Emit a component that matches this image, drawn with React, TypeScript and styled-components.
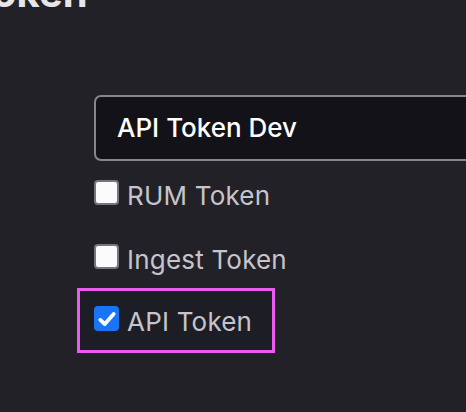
import React, { useState } from 'react';
import styled, { createGlobalStyle } from 'styled-components';

const GlobalStyle = createGlobalStyle`
    html, body {
        margin: 0;
        padding: 0;
        background: #222128;
        overflow: hidden;
    }
    body {
        font-family: Inter, 'Noto Sans', sans-serif;
    }
`;

const Page = styled.div`
    width: 466px;
    height: 412px;
    padding-left: 94px;
    box-sizing: border-box;
    overflow: hidden;
`;

// заголовок уходит за левый край, как на снимке
const Title = styled.h1`
    margin: -27px 0 82px -210px;
    font-size: 40px;
    line-height: 40px;
    font-weight: 700;
    color: #e6e5ea;
    white-space: nowrap;
`;

const NameInput = styled.input`
    display: block;
    width: 420px;
    height: 66px;
    box-sizing: border-box;
    padding: 0 0 2px 21px;
    border: 2px solid #86858b;
    border-radius: 7px;
    background: #131218;
    color: #ffffff;
    font-family: Inter, 'Noto Sans', sans-serif;
    font-size: 26px;
    font-weight: 500;
    outline: none;
`;

const Options = styled.div`
    display: flex;
    flex-direction: column;
    align-items: flex-start;
    margin-top: 19px;
`;

const Option = styled.label<{ $highlight?: boolean }>`
    display: inline-flex;
    align-items: flex-start;
    gap: 8px;
    height: 25px;
    cursor: pointer;
    color: #c6c5cb;
    font-size: 26px;
    font-weight: 400;
    margin-bottom: 39px;

    ${(p) =>
        p.$highlight &&
        `
        height: auto;
        margin: -20px 0 0 -17px;
        padding: 15px 20px 16px 14px;
        border: 3px solid #ec5bef;
        background: #1d1e25;
    `}
`;

const Box = styled.span<{ $checked: boolean }>`
    display: inline-flex;
    align-items: center;
    justify-content: center;
    width: 25px;
    height: 25px;
    box-sizing: border-box;
    border-radius: 4px;
    flex-shrink: 0;
    background: ${(p) => (p.$checked ? '#1a74f6' : '#fbfbfd')};
    border: ${(p) => (p.$checked ? 'none' : '2px solid #77767d')};
`;

const Text = styled.span`
    line-height: 25px;
    padding-top: 3px;
    letter-spacing: 0.2px;
`;

const Check = () => (
    <svg width="20" height="20" viewBox="0 0 18 18">
        <path d="M3 9.8 L7 13.6 L15 4.4" fill="none" stroke="#ffffff" strokeWidth="3.4" strokeLinecap="round" strokeLinejoin="round" />
    </svg>
);

const App: React.FC = () => {
    const [checked, setChecked] = useState({ rum: false, ingest: false, api: true });

    const toggle = (key: 'rum' | 'ingest' | 'api') => setChecked({ ...checked, [key]: !checked[key] });

    return (
        <Page>
            <GlobalStyle />
            <Title>Edit Token</Title>
            <NameInput defaultValue="API Token Dev" />
            <Options>
                <Option onClick={() => toggle('rum')}>
                    <Box $checked={checked.rum}>{checked.rum && <Check />}</Box>
                    <Text>RUM Token</Text>
                </Option>
                <Option onClick={() => toggle('ingest')}>
                    <Box $checked={checked.ingest}>{checked.ingest && <Check />}</Box>
                    <Text>Ingest Token</Text>
                </Option>
                <Option $highlight onClick={() => toggle('api')}>
                    <Box $checked={checked.api}>{checked.api && <Check />}</Box>
                    <Text>API Token</Text>
                </Option>
            </Options>
        </Page>
    );
};

export default App;
